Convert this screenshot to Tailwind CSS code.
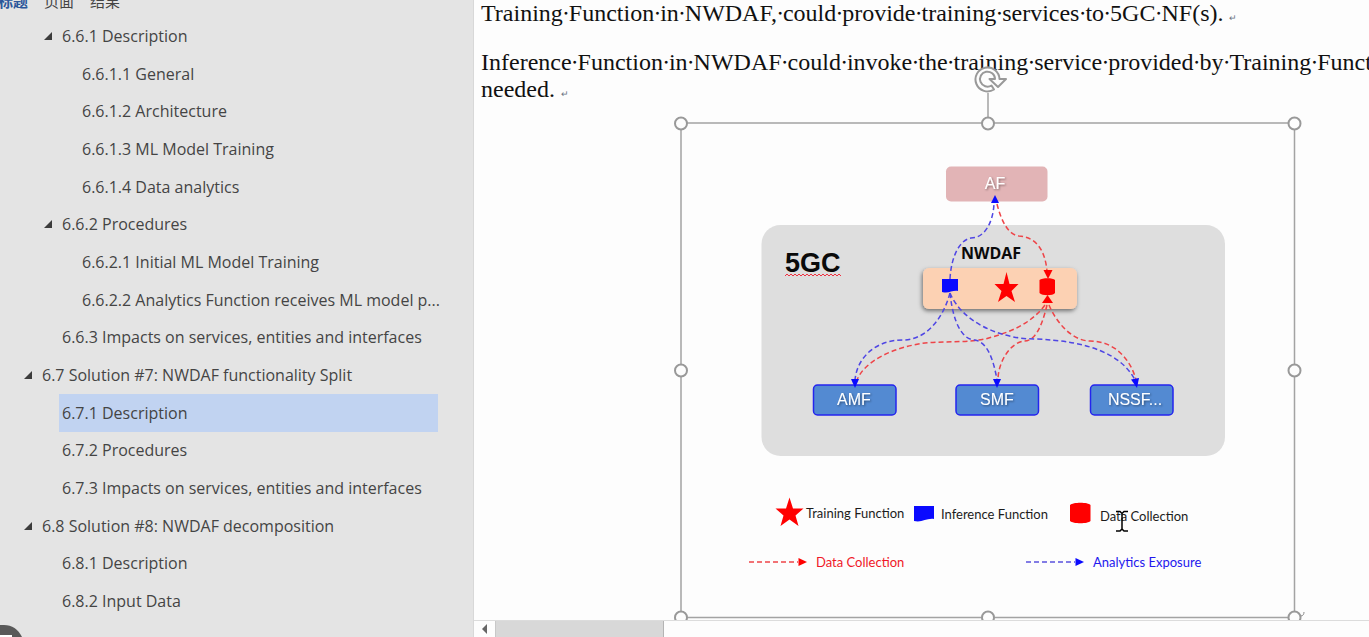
<!DOCTYPE html>
<html lang="en">
<head>
<meta charset="utf-8">
<title>NWDAF functionality split</title>
<script src="https://cdn.jsdelivr.net/npm/@tailwindcss/browser@4"></script>
</head>
<body class="flex h-screen overflow-hidden bg-[#fdfdfd]">
<aside class="relative flex w-[474px] shrink-0 flex-col overflow-hidden border-r border-[#d8d8d8] bg-[#e4e4e4] pb-[17px] font-['Open_Sans','Noto_Sans_CJK_SC',sans-serif] text-base text-[#444444]">
  <div class="flex h-[17px] shrink-0 items-end gap-4 pb-[6px] text-[15px] leading-5">
    <button class="-ml-[2px] shrink-0 font-bold text-[#2b579a]">标题</button>
    <button class="shrink-0">页面</button>
    <button class="shrink-0">结果</button>
  </div>
  <nav aria-label="Headings" class="flex min-h-0 flex-1 flex-col">
    <a href="#s661" class="flex flex-1 items-center gap-[10px] pl-[44px]"><svg class="size-2" viewBox="0 0 8 8"><path d="M8 0V8H0Z" fill="#3c3c3c"/></svg>6.6.1 Description</a>
    <a href="#s6611" class="flex flex-1 items-center pl-[82px]">6.6.1.1 General</a>
    <a href="#s6612" class="flex flex-1 items-center pl-[82px]">6.6.1.2 Architecture</a>
    <a href="#s6613" class="flex flex-1 items-center pl-[82px]">6.6.1.3 ML Model Training</a>
    <a href="#s6614" class="flex flex-1 items-center pl-[82px]">6.6.1.4 Data analytics</a>
    <a href="#s662" class="flex flex-1 items-center gap-[10px] pl-[44px]"><svg class="size-2" viewBox="0 0 8 8"><path d="M8 0V8H0Z" fill="#3c3c3c"/></svg>6.6.2 Procedures</a>
    <a href="#s6621" class="flex flex-1 items-center pl-[82px]">6.6.2.1 Initial ML Model Training</a>
    <a href="#s6622" class="flex flex-1 items-center pl-[82px]">6.6.2.2 Analytics Function receives ML model p...</a>
    <a href="#s663" class="flex flex-1 items-center pl-[62px]">6.6.3 Impacts on services, entities and interfaces</a>
    <a href="#s67" class="flex flex-1 items-center gap-[10px] pl-6"><svg class="size-2" viewBox="0 0 8 8"><path d="M8 0V8H0Z" fill="#3c3c3c"/></svg>6.7 Solution #7: NWDAF functionality Split</a>
    <a href="#s671" aria-current="true" class="mr-[35px] ml-[59px] flex flex-1 items-center bg-[#c1d3f1] pl-[3px]">6.7.1 Description</a>
    <a href="#s672" class="flex flex-1 items-center pl-[62px]">6.7.2 Procedures</a>
    <a href="#s673" class="flex flex-1 items-center pl-[62px]">6.7.3 Impacts on services, entities and interfaces</a>
    <a href="#s68" class="flex flex-1 items-center gap-[10px] pl-6"><svg class="size-2" viewBox="0 0 8 8"><path d="M8 0V8H0Z" fill="#3c3c3c"/></svg>6.8 Solution #8: NWDAF decomposition</a>
    <a href="#s681" class="flex flex-1 items-center pl-[62px]">6.8.1 Description</a>
    <a href="#s682" class="flex flex-1 items-center pl-[62px]">6.8.2 Input Data</a>
  </nav>
  <svg class="absolute bottom-0 left-0 h-3 w-6" viewBox="0 0 24 12"><path d="M0 0H4C12 0 18 4 22 12H0Z" fill="#595959"/><path d="M0 10H12V12H0Z" fill="#fff"/></svg>
</aside>

<div class="flex min-w-0 flex-1 flex-col">
  <main class="min-h-0 flex-1 overflow-hidden pl-[7px] font-['Liberation_Serif',serif] text-2xl leading-[27px] whitespace-nowrap text-[#111111]">
    <p class="mb-[22px]">Training∙Function∙in∙NWDAF,∙could∙provide∙training∙services∙to∙5GC∙NF(s). <span class="text-[9px] leading-none text-gray-500">↵</span></p>
    <p class="mb-5">Inference∙Function∙in∙NWDAF∙could∙invoke∙the∙training∙service∙provided∙by∙Training∙Function∙if∙<br>needed. <span class="text-[9px] leading-none text-gray-500">↵</span></p>
    <svg class="ml-[200px] block h-[494px] w-[613px] overflow-visible" viewBox="681 123 613 494" fill="none" role="img" aria-label="5GC architecture with NWDAF">
      <defs>
        <filter id="soft" x="-10%" y="-20%" width="120%" height="150%"><feDropShadow dx="-1" dy="2" stdDeviation="2" flood-color="#000" flood-opacity="0.5"/></filter>
        <filter id="txt" x="-10%" y="-20%" width="120%" height="150%"><feDropShadow dx="1" dy="1" stdDeviation="1" flood-color="#000" flood-opacity="0.45"/></filter>
      </defs>

      <!-- core network -->
      <rect x="761.5" y="225" width="463.5" height="231" rx="19" fill="#dedede"/>
      <rect x="946" y="166.5" width="101.5" height="35" rx="5" fill="#e2b4b6"/>
      <rect x="923" y="268" width="154" height="41" rx="6" fill="#fcd1b3" filter="url(#soft)"/>
      <g fill="#538ad2" stroke="#2424ee" stroke-width="1.5">
        <rect x="813.5" y="385" width="82.5" height="30" rx="4"/>
        <rect x="956" y="385" width="82.5" height="30" rx="4"/>
        <rect x="1090.5" y="385" width="82.5" height="30" rx="4"/>
      </g>
      <g font-family="Liberation Sans" font-size="16" fill="#fff" text-anchor="middle" filter="url(#txt)">
        <text x="995" y="189">AF</text>
        <text x="854" y="405">AMF</text>
        <text x="997" y="405">SMF</text>
        <text x="1135" y="405">NSSF...</text>
      </g>
      <text x="785" y="272" font-family="Liberation Sans" font-size="27" font-weight="bold" fill="#0a0a0a">5GC</text>
      <path d="M785 276l2-2 2 2 2-2 2 2 2-2 2 2 2-2 2 2 2-2 2 2 2-2 2 2 2-2 2 2 2-2 2 2 2-2 2 2 2-2 2 2 2-2 2 2 2-2 2 2 2-2 2 2 2-2 2 2" stroke="#f03040"/>
      <text x="961" y="259" font-family="Open Sans" font-size="16" font-weight="bold" fill="#0a0a0a">NWDAF</text>

      <!-- data collection links -->
      <g stroke="#ee4448" stroke-width="1.5" stroke-dasharray="5 3">
        <path d="M997 204C1001 220 1008 235 1019 236C1036 237 1045 250 1047 271"/>
        <path d="M1045 305C1030 325 1008 333 985 339C965 343 945 341 925 343C895 347 865 360 857 380"/>
        <path d="M1047 305C1041 330 1034 341 1024 341C1010 343 998 362 998 380"/>
        <path d="M1049 305C1056 322 1072 341 1090 341C1115 341 1131 360 1136 380"/>
      </g>
      <!-- analytics exposure links -->
      <g stroke="#4f46e4" stroke-width="1.5" stroke-dasharray="5 3">
        <path d="M950 279C951 258 959 240 971 238C985 238 993 222 994 204"/>
        <path d="M950 293C942 322 924 340 903 340C875 340 857 358 855 380"/>
        <path d="M950 293C953 322 962 340 975 340C988 342 994 362 997 380"/>
        <path d="M950 293C962 322 1000 339 1035 339C1090 341 1122 355 1135 380"/>
      </g>
      <g fill="#0a0aff">
        <path d="M995 195L999 203H991Z"/>
        <path d="M855 388L851 379H859Z"/>
        <path d="M997 388L993 379H1001Z"/>
        <path d="M1137 388L1131 379.5L1139 378Z"/>
        <path d="M942 279H958V291C952 290 949 294 942 292Z"/>
      </g>
      <g fill="#ff0000">
        <path d="M1048 279L1043.5 270H1052.5Z"/>
        <path d="M1047.5 295L1053 303H1042Z"/>
        <path d="M1039.5 280C1042 277.5 1053 277.5 1055 280V293C1053 296 1042 296 1039.5 293Z"/>
        <path d="M1006.5 272L1009.5 284H1018.5L1011.5 291L1015 302L1006.5 296L998 302L1001.5 291L994.5 284H1003.5Z"/>
      </g>

      <!-- legend -->
      <path d="M789.5 497.5L793 508.5H803.5L795.5 515.5L798.5 526L789.5 519.5L780.5 526L783.5 515.5L775.5 508.5H786Z" fill="#ff0000"/>
      <path d="M914 506H934V519C926 518 922 523 914 521Z" fill="#0a0aff"/>
      <path d="M1070 505C1073 502 1088 502 1090.5 505V521C1088 524 1073 524 1070 521Z" fill="#ff0000"/>
      <g font-family="Lato" font-size="13" fill="#1c1c1c">
        <text x="806" y="518">Training Function</text>
        <text x="941" y="519">Inference Function</text>
        <text x="1100" y="521">Data Collection</text>
        <text x="816" y="567" fill="#f01828">Data Collection</text>
        <text x="1093" y="567" fill="#2418ee">Analytics Exposure</text>
      </g>
      <path d="M749 562H798" stroke="#ee4448" stroke-width="1.5" stroke-dasharray="5 3"/>
      <path d="M807 562L798.5 558V566Z" fill="#ff0000"/>
      <path d="M1026 562H1075" stroke="#5a52dd" stroke-width="1.5" stroke-dasharray="5 3"/>
      <path d="M1084 562L1075.5 558V566Z" fill="#0a0aff"/>

      <!-- text cursor -->
      <path d="M1116 511.5H1120L1122 513.5L1124 511.5H1128M1122 513V529M1116 531H1120L1122 529L1124 531H1128" stroke="#000" stroke-width="1.5"/>

      <!-- selection frame, handles and rotate control -->
      <path d="M681 123H1294.5V617.5H681Z M988 93V123" stroke="#a3a3a3" stroke-width="1.5"/>
      <g fill="#fdfdfd" stroke="#999" stroke-width="2">
        <circle cx="681" cy="123.5" r="6"/><circle cx="988" cy="123.5" r="6"/><circle cx="1294.5" cy="123.5" r="6"/>
        <circle cx="681" cy="370.5" r="6"/><circle cx="1294.5" cy="370.5" r="6"/>
        <circle cx="681" cy="617.5" r="6"/><circle cx="988" cy="617.5" r="6"/><circle cx="1294.5" cy="617.5" r="6"/>
      </g>
      <path d="M1301 616C1303 616 1304 614 1304 612" stroke="#888"/>
      <path d="M994 89.5A12 12 0 1 1 999.5 79H1006L998 87L989.5 79H995A7.5 7.5 0 1 0 991.5 85.5Z" fill="#fdfdfd" stroke="#999" stroke-width="2" stroke-linejoin="round"/>
    </svg>
  </main>
  <div class="flex h-[17px] shrink-0 border-t border-[#dcdcdc]" role="group" aria-label="Horizontal scroll">
    <button aria-label="Scroll left" class="flex w-[22px] items-center justify-center border-r border-[#c8c8c8]"><svg class="h-[10px] w-[5px]" viewBox="0 0 5 10"><path d="M5 0V10L0 5Z" fill="#666"/></svg></button>
    <div class="w-[168px] border-r border-[#b4b4b4] bg-[#d8d8d8]"></div>
  </div>
</div>
</body>
</html>
